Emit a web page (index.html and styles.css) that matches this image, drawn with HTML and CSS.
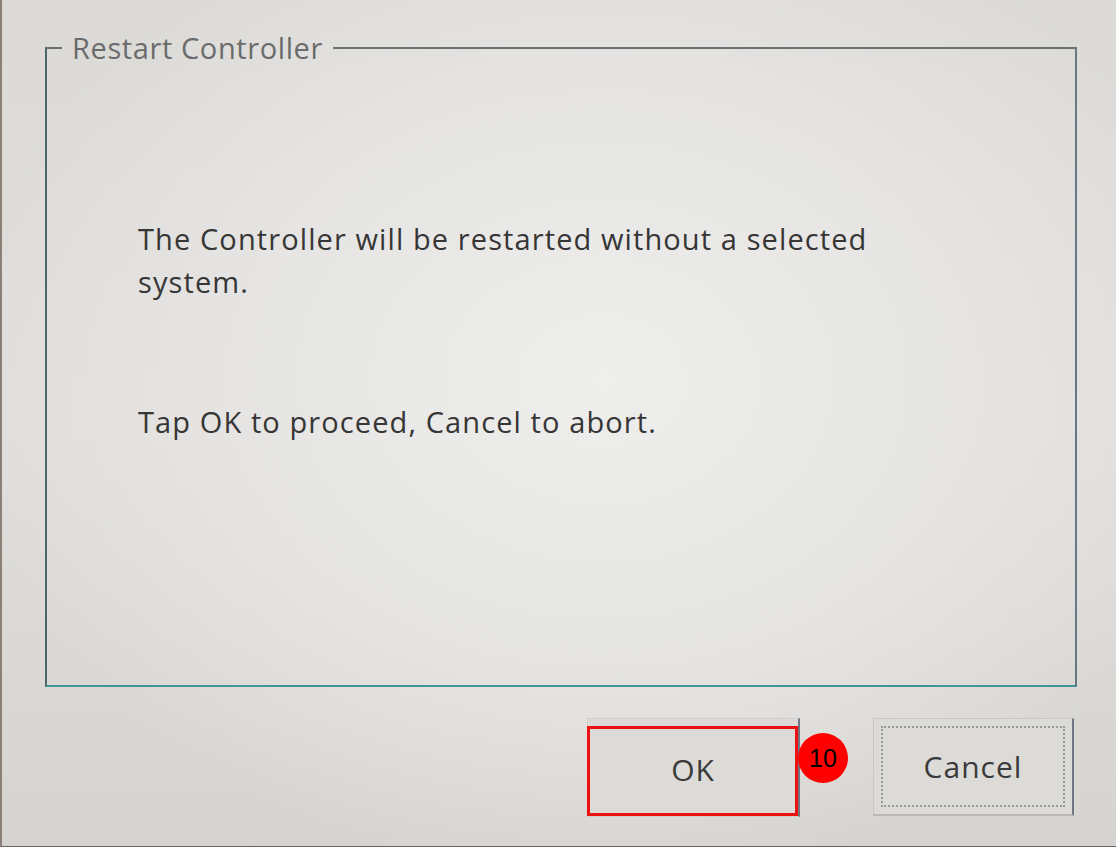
FILE: index.html
```html
<!DOCTYPE html>
<html lang="en">
<head>
<meta charset="utf-8">
<title>Restart Controller</title>
<link rel="stylesheet" href="styles.css">
</head>
<body>
<div class="screen">
  <fieldset class="group">
    <legend class="group-title">Restart Controller</legend>
    <div class="message">
      <p class="para">The Controller will be restarted without a selected system.</p>
      <p class="para">Tap OK to proceed, Cancel to abort.</p>
    </div>
  </fieldset>
  <div class="actions">
    <div class="ok-wrap">
      <button class="btn btn-ok" type="button">OK</button>
      <span class="highlight"></span>
      <span class="badge">10</span>
    </div>
    <button class="btn btn-cancel" type="button"><span class="focus">Cancel</span></button>
  </div>
</div>
</body>
</html>
```

FILE: styles.css
```css
html, body {
  margin: 0;
  padding: 0;
  background: #ffffff;
}

body {
  font-family: "Open Sans", "Noto Sans", "DejaVu Sans", sans-serif;
  color: #333333;
}

.screen {
  box-sizing: border-box;
  width: 1116px;
  height: 847px;
  padding: 33px 0 0 45px;
  border-left: 2px solid #8a8078;
  border-bottom: 1px solid #6a6460;
  background:
    radial-gradient(ellipse 640px 500px at 600px 380px, #eeeeed 0%, #e6e5e3 55%, rgba(228,227,225,0) 100%),
    linear-gradient(180deg, #dbdad7 0%, #dfdedb 50%, #d6d4d1 100%);
  display: flex;
  flex-direction: column;
}

.group {
  box-sizing: border-box;
  margin: 0 0 0 -2px;
  width: 1032px;
  height: 654px;
  padding: 0;
  border-style: solid;
  border-width: 2px;
  border-top-color: #6f6f6f;
  border-left-color: #4d666c;
  border-bottom-color: #3e9696;
  border-right-color: #6a7684;
  min-width: 0;
}

.group-title {
  margin-left: 15px;
  padding: 0 10px;
  font-size: 29px;
  letter-spacing: 0.6px;
  line-height: 30px;
  color: #6b6b6b;
}

.message {
  max-width: 790px;
  padding: 154px 0 0 91px;
}

.para {
  margin: 0 0 97px 0;
  font-size: 29px;
  letter-spacing: 1.1px;
  line-height: 43px;
  color: #363636;
}

.actions {
  display: flex;
  justify-content: flex-end;
  gap: 73px;
  padding: 31px 42px 0 0;
}

.btn {
  box-sizing: border-box;
  font-family: "Open Sans", "Noto Sans", "DejaVu Sans", sans-serif;
  font-size: 30px;
  letter-spacing: 1px;
  color: #3a3a3a;
  background: #dcdbd8;
  cursor: pointer;
}

.ok-wrap {
  position: relative;
  width: 213px;
  height: 99px;
}

.btn-ok {
  width: 213px;
  height: 99px;
  padding: 4px 0 0 0;
  border-style: solid;
  border-width: 1px 2px 1px 1px;
  border-color: #cfcecb #6e7684 #cfcecb #cfcecb;
}

.highlight {
  position: absolute;
  left: 0;
  top: 8px;
  width: 211px;
  height: 90px;
  box-sizing: border-box;
  border: 3px solid #ee1111;
  pointer-events: none;
}

.badge {
  position: absolute;
  left: 211px;
  top: 15px;
  width: 50px;
  height: 50px;
  border-radius: 50%;
  background: #ff0000;
  color: #000000;
  font-family: "Liberation Sans", Arial, sans-serif;
  font-size: 25px;
  line-height: 50px;
  text-align: center;
}

.btn-cancel {
  width: 201px;
  height: 98px;
  padding: 7px;
  border-style: solid;
  border-width: 1px 2px 2px 1px;
  border-color: #c9c8c5 #6e7684 #b9b8b6 #c9c8c5;
  display: flex;
}

.focus {
  flex: 1;
  display: flex;
  align-items: center;
  justify-content: center;
  border: 2px dotted #9a9a9a;
}
```
